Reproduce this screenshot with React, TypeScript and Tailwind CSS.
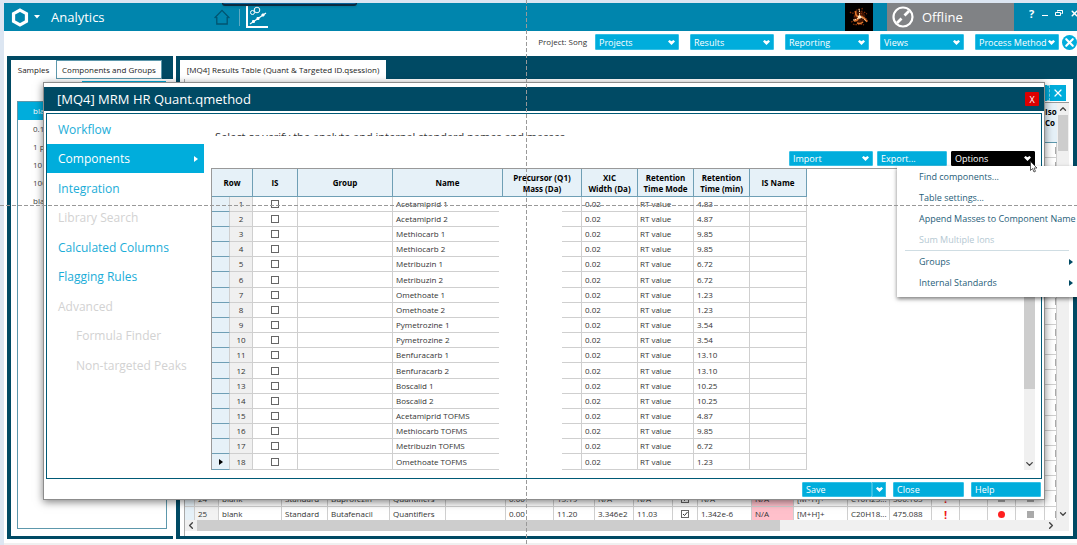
import type { ReactNode } from "react";
import { ChevronDown, ChevronLeft, ChevronRight, ChevronUp, X } from "lucide-react";
import clsx from "clsx";

interface Component {
  name: string;
  rt: string;
}

const COMPONENTS: Component[] = [
  { name: "Acetamiprid 1", rt: "4.83" },
  { name: "Acetamiprid 2", rt: "4.87" },
  { name: "Methiocarb 1", rt: "9.85" },
  { name: "Methiocarb 2", rt: "9.85" },
  { name: "Metribuzin 1", rt: "6.72" },
  { name: "Metribuzin 2", rt: "6.72" },
  { name: "Omethoate 1", rt: "1.23" },
  { name: "Omethoate 2", rt: "1.23" },
  { name: "Pymetrozine 1", rt: "3.54" },
  { name: "Pymetrozine 2", rt: "3.54" },
  { name: "Benfuracarb 1", rt: "13.10" },
  { name: "Benfuracarb 2", rt: "13.10" },
  { name: "Boscalid 1", rt: "10.25" },
  { name: "Boscalid 2", rt: "10.25" },
  { name: "Acetamiprid TOFMS", rt: "4.87" },
  { name: "Methiocarb TOFMS", rt: "9.85" },
  { name: "Metribuzin TOFMS", rt: "6.72" },
  { name: "Omethoate TOFMS", rt: "1.23" },
];

const STEPS = [
  { label: "Workflow" },
  { label: "Components", active: true },
  { label: "Integration" },
  { label: "Library Search", disabled: true },
  { label: "Calculated Columns" },
  { label: "Flagging Rules" },
  { label: "Advanced", disabled: true },
  { label: "Formula Finder", disabled: true, nested: true },
  { label: "Non-targeted Peaks", disabled: true, nested: true },
];

const SAMPLES = ["blank", "0.1 ppb", "1 ppb", "10 ppb", "100 ppb", "blank"];

// rows 1-23 sit behind the method dialog
const HIDDEN_ROWS = Array.from({ length: 23 }, (_, i) => i + 1);

const RESULTS = [
  { row: 24, component: "Buprofezin", rt: "13.19", area: "N/A", actual: "N/A", calc: "N/A", formula: "C16H23...", mass: "306.163", alert: false },
  { row: 25, component: "Butafenacil", rt: "11.20", area: "3.346e2", actual: "11.03", calc: "1.342e-6", formula: "C20H18...", mass: "475.088", alert: true },
];

function Caret() {
  return (
    <svg viewBox="0 0 7 5" className="h-[5px] w-[7px] shrink-0" fill="currentColor" aria-hidden="true">
      <path d="M0 1.5 1.5 0 3.5 1.2 5.5 0 7 1.5 3.5 5Z" />
    </svg>
  );
}

function Triangle({ className }: { className?: string }) {
  return (
    <svg viewBox="0 0 4 6" className={clsx("h-[6px] w-1 shrink-0", className)} fill="currentColor" aria-hidden="true">
      <path d="M0 0 4 3 0 6Z" />
    </svg>
  );
}

function MenuButton({ children, dark, menu = true, className }: { children: ReactNode; dark?: boolean; menu?: boolean; className: string }) {
  return (
    <button
      type="button"
      aria-haspopup={menu ? "menu" : undefined}
      className={clsx("flex items-center justify-between rounded-[1px] border px-[3px] text-[9px] leading-none text-white", dark ? "border-black bg-black" : "border-[#35c0e5] bg-[#00addc]", className)}
    >
      {children}
      {menu && <Caret />}
    </button>
  );
}

function AppHeader() {
  return (
    <header className="relative flex h-7 shrink-0 items-center bg-[#0085ad] text-white">
      <div className="absolute top-0 left-[218px] h-[3px] w-[135px] rounded-b-[3px] border-x border-b-2 border-[#0b2a40] bg-[#05629a] shadow-sm" />
      <svg viewBox="0 0 18 20" className="ml-[7px] h-[19px] w-[18px]" fill="none" stroke="currentColor" strokeWidth="3.4" aria-hidden="true">
        <path d="M9 2.2 15.8 6v8L9 17.8 2.2 14V6Z" />
      </svg>
      <svg viewBox="0 0 6 4" className="ml-[5px] h-1 w-[6px]" fill="currentColor" aria-hidden="true">
        <path d="M0 0h6L3 3.5Z" />
      </svg>
      <h1 className="ml-[11px] w-[163px] text-[13px] leading-none">Analytics</h1>
      <button type="button" aria-label="Home" className="text-[#005470]">
        <svg viewBox="0 0 16 16" className="h-4 w-4" fill="none" stroke="currentColor" strokeWidth="1.3">
          <path d="M.6 9 8 1.4 15.4 9M2.8 8v7h10.4V8" />
        </svg>
      </button>
      <div className="ml-[9px] h-[17px] w-px bg-[#5fa9c2]" />
      <button type="button" aria-label="Analytics workspace" className="ml-[6px]">
        <svg viewBox="0 0 22 22" className="h-[22px] w-[22px]" fill="none" stroke="currentColor">
          <path d="M1 0v21h21" strokeWidth="2" />
          <path d="M4 18 20 7" strokeWidth="1.2" />
          <circle cx="6.5" cy="6.5" r="2" />
          <circle cx="11" cy="4" r="2.8" />
          <path d="M7.5 14v3M6 15.5h3M12 11v3M10.5 12.5h3M17 7.500v3M15.500 9h3" strokeWidth="1.800" />
        </svg>
      </button>
      <div className="ml-auto h-7 w-7 bg-black">
        <svg viewBox="0 0 28 28" className="h-7 w-7" fill="none" aria-hidden="true">
          <circle cx="14.500" cy="14" r="6" fill="#5a1c04" opacity=".7" />
          <path d="M5 9c4 4 5-3 10-3M17 5c1 4-3 6 1 9s5 1 4 5M6 19c4-1 5-4 9-4M8 21c4 2 7-1 11 1M9 13l4 1M19 9l3 2" stroke="#8c3308" strokeWidth="1.200" strokeDasharray="1.500 1" />
          <path d="M11 8c-1 3 0 5 3 6M14 14c3-1 6 1 8 5M9 18c2 0 4-1 5-4M12 20c3 1 5 0 6-1" stroke="#e0762c" strokeWidth="1.600" />
          <path d="M14 6c1 3 0 6 1 8M15 14c3 1 5 2 6 5M8 17c3 0 5-2 7-3" stroke="#ffd9a8" strokeWidth="1" strokeDasharray="3 1" />
          <circle cx="14.500" cy="14" r="1.800" fill="#ffe9c4" />
        </svg>
      </div>
      <div className="ml-[14px] flex h-7 w-[127px] items-center bg-[#808285] pl-[5px]">
        <svg viewBox="0 0 22 22" className="h-[22px] w-[22px]" fill="none" stroke="currentColor" aria-hidden="true">
          <circle cx="11" cy="11" r="9.500" strokeWidth="2.200" />
          <path d="m5 17 4.500-4.500M12.500 9.500 17 5" strokeWidth="2.800" />
        </svg>
        <span className="ml-2 text-[13px] leading-none">Offline</span>
      </div>
      <div className="mb-2 ml-[15px] flex h-3 w-12 items-center overflow-hidden">
        <button type="button" className="w-[6px] text-[11px] leading-none font-bold">?</button>
        <button type="button" aria-label="Minimize" className="mt-1 ml-[8px] h-px w-[6px] shrink-0 bg-white" />
        <button type="button" aria-label="Restore" className="ml-[7px]">
          <svg viewBox="0 0 8 8" className="h-2 w-2" fill="none" stroke="currentColor">
            <path d="M2.500 2.500v-1h5v3h-1M.5 3.500h5v3h-5ZM2.500 1.500h5" />
          </svg>
        </button>
        <button type="button" aria-label="Close" className="ml-[7px] shrink-0">
          <X className="h-[9px] w-[9px]" strokeWidth={4} />
        </button>
      </div>
    </header>
  );
}

function Toolbar() {
  return (
    <div className="flex h-[25px] shrink-0 items-center justify-end bg-white pb-[3px]">
      <span className="mr-2 text-[8px] text-[#333]">Project: Song</span>
      <nav className="flex gap-[11px]">
        {["Projects", "Results", "Reporting", "Views", "Process Method"].map((label) => (
          <MenuButton key={label} className="h-4 w-[84px]">{label}</MenuButton>
        ))}
      </nav>
      <button type="button" aria-label="Close project" className="ml-[3px] flex h-[15px] w-[15px] items-center justify-center rounded-full bg-[#00addc] text-white">
        <X className="h-[13px] w-[13px]" strokeWidth={4} />
      </button>
    </div>
  );
}

function SamplesPanel() {
  return (
    <section className="flex w-[166px] shrink-0 flex-col border-b-[3px] border-l-4 border-[#004a64] bg-white">
      <div role="tablist" className="flex h-[23px] shrink-0 bg-[#004a64] pt-1 text-[8px] text-[#222]">
        <button type="button" role="tab" aria-selected="true" className="w-[45px] bg-white">Samples</button>
        <button type="button" role="tab" aria-selected="false" className="w-[106px] border border-[#5d98ac] bg-white">Components and Groups</button>
      </div>
      <div className="mt-[2px] mr-[7px] ml-auto h-1 w-[84px] shrink-0 bg-[#00addc]" />
      <ul className="mx-[6px] mt-4 mb-[7px] flex-1 border border-[#5d98ac] text-[8px] text-[#444]">
        {SAMPLES.map((sample, i) => (
          <li key={i} className={clsx("flex h-[18px] items-center pl-[15px]", i === 0 && "bg-[#00addc] text-white")}>{sample}</li>
        ))}
      </ul>
    </section>
  );
}

function CheckBox({ label, checked }: { label: string; checked?: boolean }) {
  return (
    <span className="mx-auto grid h-2 w-2">
      <input type="checkbox" aria-label={label} defaultChecked={checked} className="peer col-start-1 row-start-1 h-2 w-2 appearance-none border border-[#666] bg-white" />
      <svg viewBox="0 0 8 8" className="pointer-events-none col-start-1 row-start-1 hidden h-2 w-2 peer-checked:block" fill="none" stroke="#333" aria-hidden="true">
        <path d="M2 4 3.500 5.500 6.500 2" />
      </svg>
    </span>
  );
}

const RESULT_COLUMNS = [10, 24, 63, 46, 62, 56, 60, 48, 41, 39, 39, 25, 54, 42, 54, 42, 42, 28, 28, 28, 29, 12];

function ResultsTable() {
  return (
    <table className="w-[872px] table-fixed border-separate border-spacing-0 text-[8px] leading-none whitespace-nowrap text-[#333] [&_td]:h-[15px] [&_td]:overflow-hidden [&_td]:border-r [&_td]:border-b [&_td]:border-[#cfcfcf] [&_td]:p-0 [&_td]:pl-[3px] [&_tr:nth-child(6n)_td]:h-4">
      <colgroup>
        {RESULT_COLUMNS.map((width, i) => <col key={i} style={{ width }} />)}
      </colgroup>
      <thead>
        <tr>
          <th colSpan={21} className="h-10 border-b border-[#5d98ac] bg-[#e6f1f8] p-0" />
          <th className="h-10 overflow-hidden border-b border-[#5d98ac] bg-[#e6f1f8] p-0 pb-3 text-left leading-[11px] text-black">Iso<br />Co</th>
        </tr>
      </thead>
      <tbody>
        {HIDDEN_ROWS.map((row) => (
          <tr key={row}>
            <td colSpan={21} />
            <td><div className="ml-[7px] h-[7px] w-[7px] bg-[#aaa]" /></td>
          </tr>
        ))}
        {RESULTS.map((r) => (
          <tr key={r.row}>
            <td className="bg-[#e6f1f8]" />
            <td className="bg-[#f2f2f2]">{r.row}</td>
            <td>blank</td>
            <td className="bg-white">Standard</td>
            <td>{r.component}</td>
            <td>Quantifiers</td>
            <td />
            <td>0.00</td>
            <td>{r.rt}</td>
            <td>{r.area}</td>
            <td>{r.actual}</td>
            <td className="pl-0!"><CheckBox label={`Use row ${r.row}`} checked /></td>
            <td>{r.calc}</td>
            <td className="bg-[#ffc0cb]">N/A</td>
            <td>[M+H]+</td>
            <td>{r.formula}</td>
            <td>{r.mass}</td>
            <td className="pl-0! text-center text-[11px] font-bold text-[#f01818]">!</td>
            <td />
            <td className="pl-0!"><div className={clsx("mx-auto h-[7px] w-[7px]", r.alert ? "rounded-full bg-[#ff2020]" : "bg-[#aaa]")} /></td>
            <td className="pl-0!"><div className="mx-auto h-[7px] w-[7px] bg-[#aaa]" /></td>
            <td><div className="ml-[7px] h-[7px] w-[7px] bg-[#aaa]" /></td>
          </tr>
        ))}
      </tbody>
    </table>
  );
}

function ResultsPanel() {
  return (
    <section className="flex min-w-0 flex-1 flex-col border-x-4 border-b-[3px] border-[#004a64] bg-white">
      <div role="tablist" className="flex h-[23px] shrink-0 bg-[#004a64] pt-1 text-[8px] text-[#222]">
        <button type="button" role="tab" aria-selected="true" className="w-[206px] bg-white">[MQ4] Results Table (Quant &amp; Targeted ID.qsession)</button>
      </div>
      <div className="mr-1 ml-1 flex min-h-0 flex-1 flex-col border-l border-[#aaa]">
        <div className="flex h-6 shrink-0 items-end justify-end border-b border-[#999] pr-[3px] pb-px text-white">
          <div className="h-4 w-20 border border-dashed border-[#7fd6ee] bg-[#00addc]" />
          <button type="button" aria-label="Close results table" className="flex h-4 w-4 items-center justify-center bg-[#00addc]">
            <X className="h-3 w-3" strokeWidth={2.5} />
          </button>
        </div>
        <div className="flex min-h-0 flex-1">
          <div className="min-w-0 flex-1 overflow-hidden">
            <ResultsTable />
          </div>
          <div className="flex w-3 shrink-0 flex-col items-center justify-between bg-[#f0f0f0] px-px text-[#444]">
            <div className="w-full">
              <ChevronUp className="mx-auto h-3 w-[10px]" strokeWidth={3} />
              <div className="h-9 bg-[#cdcdcd]" />
            </div>
            <ChevronDown className="h-3 w-[10px]" strokeWidth={3} />
          </div>
        </div>
        <div className="mb-[5px] flex h-[11px] shrink-0 items-center bg-[#f0f0f0] text-[#444]">
          <ChevronLeft className="h-[11px] w-3" strokeWidth={3} />
          <div className="h-full w-[66%] bg-[#cdcdcd]" />
          <ChevronRight className="mr-3 ml-auto h-[11px] w-3" strokeWidth={3} />
        </div>
      </div>
    </section>
  );
}

const COMPONENT_COLUMNS = [18, 23, 45, 95, 110, 79, 56, 56, 56, 57];

function ComponentsTable() {
  return (
    <table className="w-[595px] table-fixed border-separate border-spacing-0 text-[8px] leading-none whitespace-nowrap text-[#333] [&_td]:h-[15px] [&_td]:border-r [&_td]:border-b [&_td]:border-[#cfcfcf] [&_td]:p-0 [&_td]:pl-[3px] [&_th]:h-7 [&_th]:border-r [&_th]:border-b [&_th]:border-[#6f9fb5] [&_th]:bg-[#e6f1f8] [&_th]:p-0 [&_th]:leading-[11px] [&_th]:text-black [&_tr:nth-child(6n)_td]:h-4">
      <colgroup>
        {COMPONENT_COLUMNS.map((width, i) => <col key={i} style={{ width }} />)}
      </colgroup>
      <thead>
        <tr>
          <th colSpan={2}>Row</th>
          <th>IS</th>
          <th>Group</th>
          <th>Name</th>
          <th>Precursor (Q1)<br />Mass (Da)</th>
          <th>XIC<br />Width (Da)</th>
          <th>Retention<br />Time Mode</th>
          <th>Retention<br />Time (min)</th>
          <th>IS Name</th>
        </tr>
      </thead>
      <tbody>
        {COMPONENTS.map((c, i) => (
          <tr key={c.name}>
            <td className="border-b-[#6f9fb5]! bg-[#e6f1f8] pl-[7px]!">
              {i === COMPONENTS.length - 1 && <Triangle className="text-black" />}
            </td>
            <td className="bg-[#f0f0f0] pl-0! text-center">{i + 1}</td>
            <td className="pl-0!"><CheckBox label={`${c.name} is internal standard`} /></td>
            <td />
            <td>{c.name}</td>
            <td />
            <td>0.02</td>
            <td className="pl-[2px]!">RT value</td>
            <td>{c.rt}</td>
            <td />
          </tr>
        ))}
      </tbody>
    </table>
  );
}

function OptionsMenu() {
  const item = "flex h-[21px] w-full items-center justify-between pl-[14px] text-left whitespace-nowrap";
  return (
    <div role="menu" className="absolute top-full -right-[42px] z-10 w-[180px] bg-white pr-1 pb-1 pl-2 text-[9px] leading-none text-[#1f6079] shadow-[0_2px_4px_rgba(0,0,0,0.5)]">
      <button type="button" role="menuitem" className={item}>Find components...</button>
      <button type="button" role="menuitem" className={item}>Table settings...</button>
      <button type="button" role="menuitem" className={item}>Append Masses to Component Name</button>
      <button type="button" role="menuitem" disabled className={clsx(item, "text-[#b4c8d2]")}>Sum Multiple Ions</button>
      <hr className="mr-1 border-[#cfdde3]" />
      <button type="button" role="menuitem" className={item}>Groups<Triangle className="text-[#004a64]" /></button>
      <button type="button" role="menuitem" className={item}>Internal Standards<Triangle className="text-[#004a64]" /></button>
    </div>
  );
}

function Pointer() {
  return (
    <svg viewBox="0 0 8 12" className="pointer-events-none absolute top-[10px] -right-[3px] z-20 h-3 w-2" fill="#fff" stroke="#333" strokeWidth=".8" aria-hidden="true">
      <path d="M.5.5v9l2-2 1.500 3.500 1.500-.7L4 7h3Z" />
    </svg>
  );
}

function MethodDialog() {
  return (
    <div role="dialog" aria-labelledby="method-title" className="absolute top-[82px] right-8 left-[43px] border border-[#8c8c8c] bg-white pt-1 shadow-[0_2px_8px_rgba(0,0,0,0.5)]">
      <div className="flex h-6 items-center justify-between bg-[#004a64] pr-[5px] pl-[13px] text-white">
        <h2 id="method-title" className="text-[13px] leading-none">[MQ4] MRM HR Quant.qmethod</h2>
        <button type="button" aria-label="Close dialog" className="h-[14px] w-[14px] rounded-[1px] bg-[#dc0000] text-[9px] leading-none">X</button>
      </div>
      <div className="mx-[2px] mt-[2px] flex border border-[#005a76]">
        <nav className="w-[157px] shrink-0 pt-px text-[12px] leading-none">
          {STEPS.map((step) => (
            <button
              key={step.label}
              type="button"
              disabled={step.disabled}
              className={clsx(
                "flex h-[29px] w-full items-center justify-between pr-[6px] whitespace-nowrap even:mb-px",
                step.nested ? "pl-[29px]" : "pl-[11px]",
                step.active ? "bg-[#00addc] text-white" : step.disabled ? "text-[#d2d2d2]" : "text-[#1badd8]",
              )}
            >
              {step.label}
              {step.active && <Triangle />}
            </button>
          ))}
        </nav>
        <div className="ml-[7px] min-w-0 flex-1 pt-[18px] pr-[6px] pb-2">
          <p className="h-1 overflow-hidden pl-1 text-[11px] leading-[10px] whitespace-nowrap text-[#333]">Select or verify the analyte and internal standard names and masses</p>
          <div className="mt-[15px] flex justify-end gap-1">
            <MenuButton className="h-[15px] w-[84px]">Import</MenuButton>
            <MenuButton menu={false} className="h-[15px] w-[70px]">Export...</MenuButton>
            <div className="relative">
              <MenuButton dark className="h-[15px] w-[84px]">Options</MenuButton>
              <OptionsMenu />
              <Pointer />
            </div>
          </div>
          <div className="relative mt-[2px] flex justify-between border-t border-l border-[#999]">
            <ComponentsTable />
            <div className="absolute top-7 bottom-0 left-[287px] w-[63px] bg-white" />
            <div className="flex w-[11px] flex-col bg-[#f0f0f0] text-[#444]">
              <ChevronUp className="h-3 w-[11px]" strokeWidth={3} />
              <div className="h-52 bg-[#cdcdcd]" />
              <ChevronDown className="mt-auto h-3 w-[11px]" strokeWidth={3} />
            </div>
          </div>
        </div>
      </div>
      <div className="flex h-5 items-center justify-end gap-[7px] pr-[3px]">
        <div className="flex">
          <MenuButton menu={false} className="h-[15px] w-[70px]">Save</MenuButton>
          <button type="button" aria-label="Save options" aria-haspopup="menu" className="flex h-[15px] w-[14px] items-center justify-center border border-[#35c0e5] bg-[#00addc] text-white"><Caret /></button>
        </div>
        <MenuButton menu={false} className="h-[15px] w-[71px]">Close</MenuButton>
        <MenuButton menu={false} className="h-[15px] w-[70px]">Help</MenuButton>
      </div>
    </div>
  );
}

export default function App() {
  return (
    <div className="relative flex h-screen flex-col overflow-hidden bg-[#dce6f2] pt-[3px] pl-1 font-['Open_Sans','Noto_Sans',sans-serif]">
      <AppHeader />
      <Toolbar />
      <main className="flex min-h-0 flex-1 gap-[3px] bg-white pl-[3px]">
        <SamplesPanel />
        <ResultsPanel />
      </main>
      <footer className="h-[6px] shrink-0 border-t-4 border-white bg-[#f0f0f0]" />
      <MethodDialog />
      {/* crosshair guides */}
      <div className="pointer-events-none absolute inset-y-0 left-[526px] z-30 w-px bg-[repeating-linear-gradient(to_bottom,#999_0_4px,transparent_4px_6px)]" />
      <div className="pointer-events-none absolute inset-x-0 top-[205px] z-30 h-px bg-[repeating-linear-gradient(to_right,#999_0_4px,transparent_4px_6px)]" />
    </div>
  );
}
